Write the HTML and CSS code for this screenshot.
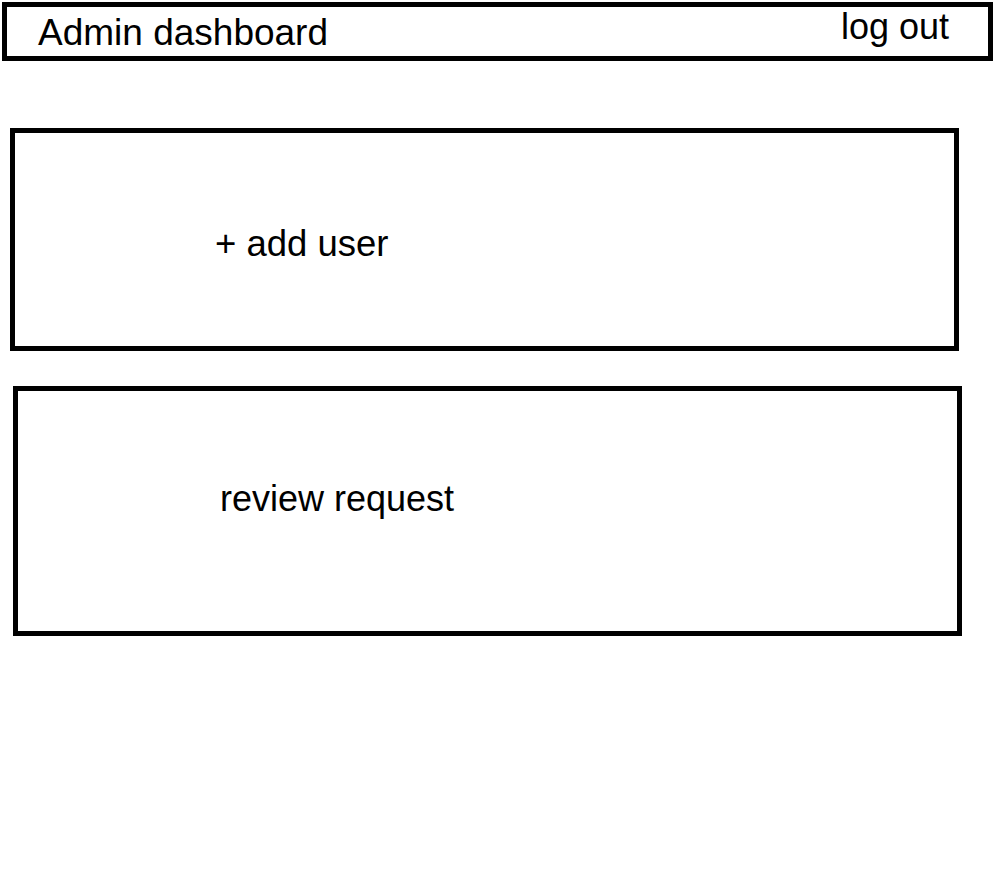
FILE: index.html
```html
<!DOCTYPE html>
<html lang="en">
<head>
<meta charset="utf-8">
<title>Admin dashboard</title>
<link rel="stylesheet" href="styles.css">
</head>
<body>
<header class="topbar">
  <h1 class="title">Admin dashboard</h1>
  <a class="logout" href="#">log out</a>
</header>
<main class="panels">
  <section class="panel panel-add">
    <span class="panel-label">+ add user</span>
  </section>
  <section class="panel panel-review">
    <span class="panel-label">review request</span>
  </section>
</main>
</body>
</html>
```
FILE: styles.css
```css
html, body {
  margin: 0;
  padding: 0;
  background: #fff;
}
body {
  font-family: "Liberation Sans", Arial, sans-serif;
  font-size: 36px;
  line-height: 1.15;
  color: #000;
  width: 1000px;
  height: 875px;
}
.topbar {
  box-sizing: border-box;
  margin: 2px 0 0 2px;
  width: 991px;
  height: 59px;
  border: 5px solid #000;
  display: flex;
  justify-content: space-between;
  align-items: flex-start;
}
.title {
  margin: 5px 0 0 31px;
  font-size: 37px;
  font-weight: normal;
  line-height: 1.15;
}
.logout {
  margin: -1px 39px 0 0;
  color: #000;
  text-decoration: none;
}
.panels {
  display: flex;
  flex-direction: column;
  gap: 35px;
  margin-top: 67px;
}
.panel {
  box-sizing: border-box;
  width: 949px;
  border: 5px solid #000;
}
.panel-add {
  margin-left: 10px;
  height: 223px;
  padding: 90px 0 0 200px;
  font-size: 36.5px;
}
.panel-review {
  margin-left: 13px;
  height: 250px;
  padding: 87px 0 0 202px;
}
.panel-label {
  display: block;
}
```
